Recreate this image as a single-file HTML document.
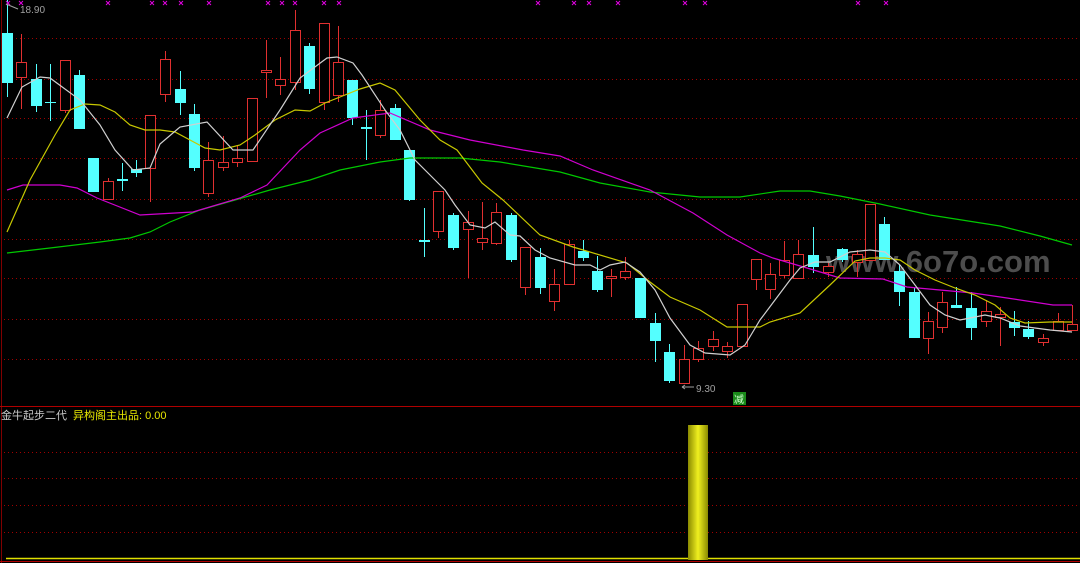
<!DOCTYPE html>
<html><head><meta charset="utf-8"><style>
html,body{margin:0;padding:0;background:#000;width:1080px;height:563px;overflow:hidden}
svg{display:block}
text{font-family:"Liberation Sans","Noto Sans CJK SC",sans-serif}
</style></head><body>
<svg id="s" width="1080" height="563" viewBox="0 0 1080 563" xmlns="http://www.w3.org/2000/svg">
<rect width="1080" height="563" fill="#000"/>
<g id="grid" stroke="#a00000" stroke-width="1" stroke-dasharray="1,3"></g>
<line x1="1.5" y1="0" x2="1.5" y2="563" stroke="#800000"/>
<line x1="0" y1="406.5" x2="1080" y2="406.5" stroke="#b00000"/>
<line x1="0" y1="561.5" x2="1080" y2="561.5" stroke="#b00000"/>
<line x1="6" y1="558.5" x2="1080" y2="558.5" stroke="#e0e000" stroke-width="1.5"/>
<text x="826" y="272" font-size="31" font-weight="bold" fill="#5a5a5a" fill-opacity="0.85">www.6o7o.com</text>
<g id="cd"></g>
<g id="ma" fill="none" stroke-width="1.2"></g>
<g id="xs" stroke="#e000e0" stroke-width="1"></g>
<text x="20" y="13" font-size="10" fill="#a0a0a0">18.90</text>
<path d="M6 4 L18 9" stroke="#a0a0a0" fill="none"/>
<path d="M682 387 L694 387 M682 387 L685 385 M682 387 L685 389" stroke="#a0a0a0" fill="none"/>
<text x="696" y="392" font-size="10" fill="#a0a0a0">9.30</text>
<rect x="733" y="392" width="13" height="13" fill="#1a8a1a"/>
<text x="734" y="403" font-size="10" fill="#d0ffd0">减</text>
<text x="1" y="419" font-size="11" fill="#c8c8c8">金牛起步二代</text>
<text x="73" y="419" font-size="11" fill="#e6e600">异构阁主出品: 0.00</text>
<defs><linearGradient id="g" x1="0" x2="1"><stop offset="0" stop-color="#8a8a00"/><stop offset="0.5" stop-color="#f0f020"/><stop offset="1" stop-color="#8a8a00"/></linearGradient></defs>
<rect x="688" y="425" width="20" height="135" fill="url(#g)"/>
</svg>
<script>
var NS="http://www.w3.org/2000/svg";
function el(p,t,a){var e=document.createElementNS(NS,t);for(var k in a)e.setAttribute(k,a[k]);p.appendChild(e);return e;}
var gr=document.getElementById('grid');
[38,79,118,158,199,239,278,319,359,452,478,505,532].forEach(function(y){el(gr,'line',{x1:4,x2:1080,y1:y+.5,y2:y+.5});});
var C=[[7,'c',33,83,0,97],[21,'r',62,77,34,109],[36,'c',79,106,64,112],[50,'c',102,103,64,121],[65,'r',60,110,60,113],[79,'c',75,129,70,129],[93,'c',158,192,158,192],[108,'r',181,199,178,199],[122,'c',179,181,163,191],[136,'c',169,173,160,177],[150,'r',115,168,115,202],[165,'r',59,94,51,102],[180,'c',89,103,71,115],[194,'c',114,168,104,171],[208,'r',160,193,142,197],[223,'r',162,167,136,171],[237,'r',158,162,145,167],[252,'r',98,161,98,161],[266,'r',70,72,40,98],[280,'r',79,85,57,95],[295,'r',30,82,10,90],[309,'c',46,89,43,94],[324,'r',23,102,23,110],[338,'r',62,95,26,102],[352,'c',80,118,80,125],[366,'c',127,129,110,160],[380,'r',110,135,100,138],[395,'c',108,140,104,140],[409,'c',150,200,150,201],[424,'c',240,242,208,257],[438,'r',191,231,191,238],[453,'c',215,248,213,250],[468,'r',222,229,211,278],[482,'r',238,242,202,250],[496,'r',212,243,203,245],[511,'c',215,260,213,262],[525,'r',247,287,247,295],[540,'c',257,288,248,294],[554,'r',284,301,269,311],[569,'r',244,284,240,284],[583,'c',251,258,240,261],[597,'c',271,290,256,292],[611,'r',276,278,269,297],[625,'r',271,277,257,280],[640,'c',278,318,278,318],[655,'c',323,341,313,362],[669,'c',352,381,344,383],[684,'r',359,383,345,383],[698,'r',348,359,341,362],[713,'r',339,346,331,351],[727,'r',346,351,342,358],[742,'r',304,346,304,346],
[756,'r',259,279,259,290],[770,'r',274,289,263,299],[784,'r',260,275,241,278],[798,'r',254,278,240,278],[813,'c',255,267,227,273],[828,'r',266,272,263,277],[842,'c',249,260,248,262],[857,'r',254,262,250,277],[870,'r',204,260,204,260],[884,'c',224,260,217,260],[899,'c',271,292,265,306],[914,'c',292,338,288,338],[928,'r',321,338,312,354],[942,'r',302,327,292,333],[956,'c',305,308,287,308],[971,'c',308,328,292,340],[986,'r',311,321,300,327],[1000,'r',314,317,307,346],[1014,'c',322,328,311,336],[1028,'c',329,337,321,339],[1043,'r',338,342,334,346],[1058,'r',321,330,313,331],[1072,'r',324,330,305,330]];
var cd=document.getElementById('cd');
C.forEach(function(k){var x=k[0],col=k[1]=='c'?'#54ffff':'#e03030';
el(cd,'line',{x1:x+.5,x2:x+.5,y1:k[4],y2:k[5],stroke:col});
var h=Math.max(1,k[3]-k[2]);
if(k[1]=='c')el(cd,'rect',{x:x-5,y:k[2],width:11,height:h,fill:col});
else{el(cd,'rect',{x:x-4.5,y:k[2]+.5,width:10,height:h,fill:'#000',stroke:col});}
});
var ma=document.getElementById('ma');
function pl(c,p){el(ma,'polyline',{stroke:c,points:p});}
pl('#00c800','7,253 50,248 100,242 130,238 150,232 170,222 200,210 235,200 270,190 310,180 340,170 380,162 410,158 460,158 500,162 560,172 600,183 650,192 700,197 740,197 780,191 810,191 840,196 880,204 930,215 1000,226 1040,236 1072,245');
pl('#d000d0','7,190 23,185 60,185 77,188 97,198 140,215 193,212 240,198 267,185 300,150 320,133 353,118 390,113 430,130 470,140 523,150 560,156 593,170 650,190 693,213 727,235 760,253 773,258 807,268 840,278 883,279 907,287 973,293 1007,298 1053,305 1072,305');
pl('#c8c800','7,232 30,180 55,135 70,110 85,104 100,105 115,112 130,125 145,130 160,130 175,132 190,140 205,148 220,150 240,145 255,135 275,120 295,110 310,111 325,103 340,97 360,89 380,83 395,90 420,120 440,140 457,150 482,183 503,200 540,235 573,247 627,263 650,282 670,297 700,310 727,327 760,327 770,322 800,313 830,285 855,261 870,258 885,258 900,260 915,270 935,280 955,288 975,295 995,305 1010,318 1025,323 1050,322 1072,322');
pl('#d0d0d0','7,118 22,87 40,77 50,78 80,100 100,125 115,150 133,170 150,168 160,144 180,127 207,122 233,150 253,150 280,110 300,78 327,58 337,57 353,63 362,75 385,110 400,130 415,160 430,175 445,190 455,205 470,225 485,228 495,222 510,235 520,236 535,250 550,258 575,265 590,265 600,270 610,265 625,262 640,272 655,290 670,318 690,345 705,353 730,355 745,345 760,320 775,300 790,280 800,268 815,262 830,262 850,252 870,250 885,252 900,265 915,285 930,305 945,315 960,320 975,317 985,315 1000,318 1020,326 1050,330 1072,332');
var xs=document.getElementById('xs');
[8,21,108,152,165,181,209,268,282,295,324,339,538,574,589,618,685,705,858,886].forEach(function(x){el(xs,'path',{d:'M'+(x-2)+' 1 L'+(x+2)+' 5 M'+(x+2)+' 1 L'+(x-2)+' 5'});});
</script>
</body></html>
